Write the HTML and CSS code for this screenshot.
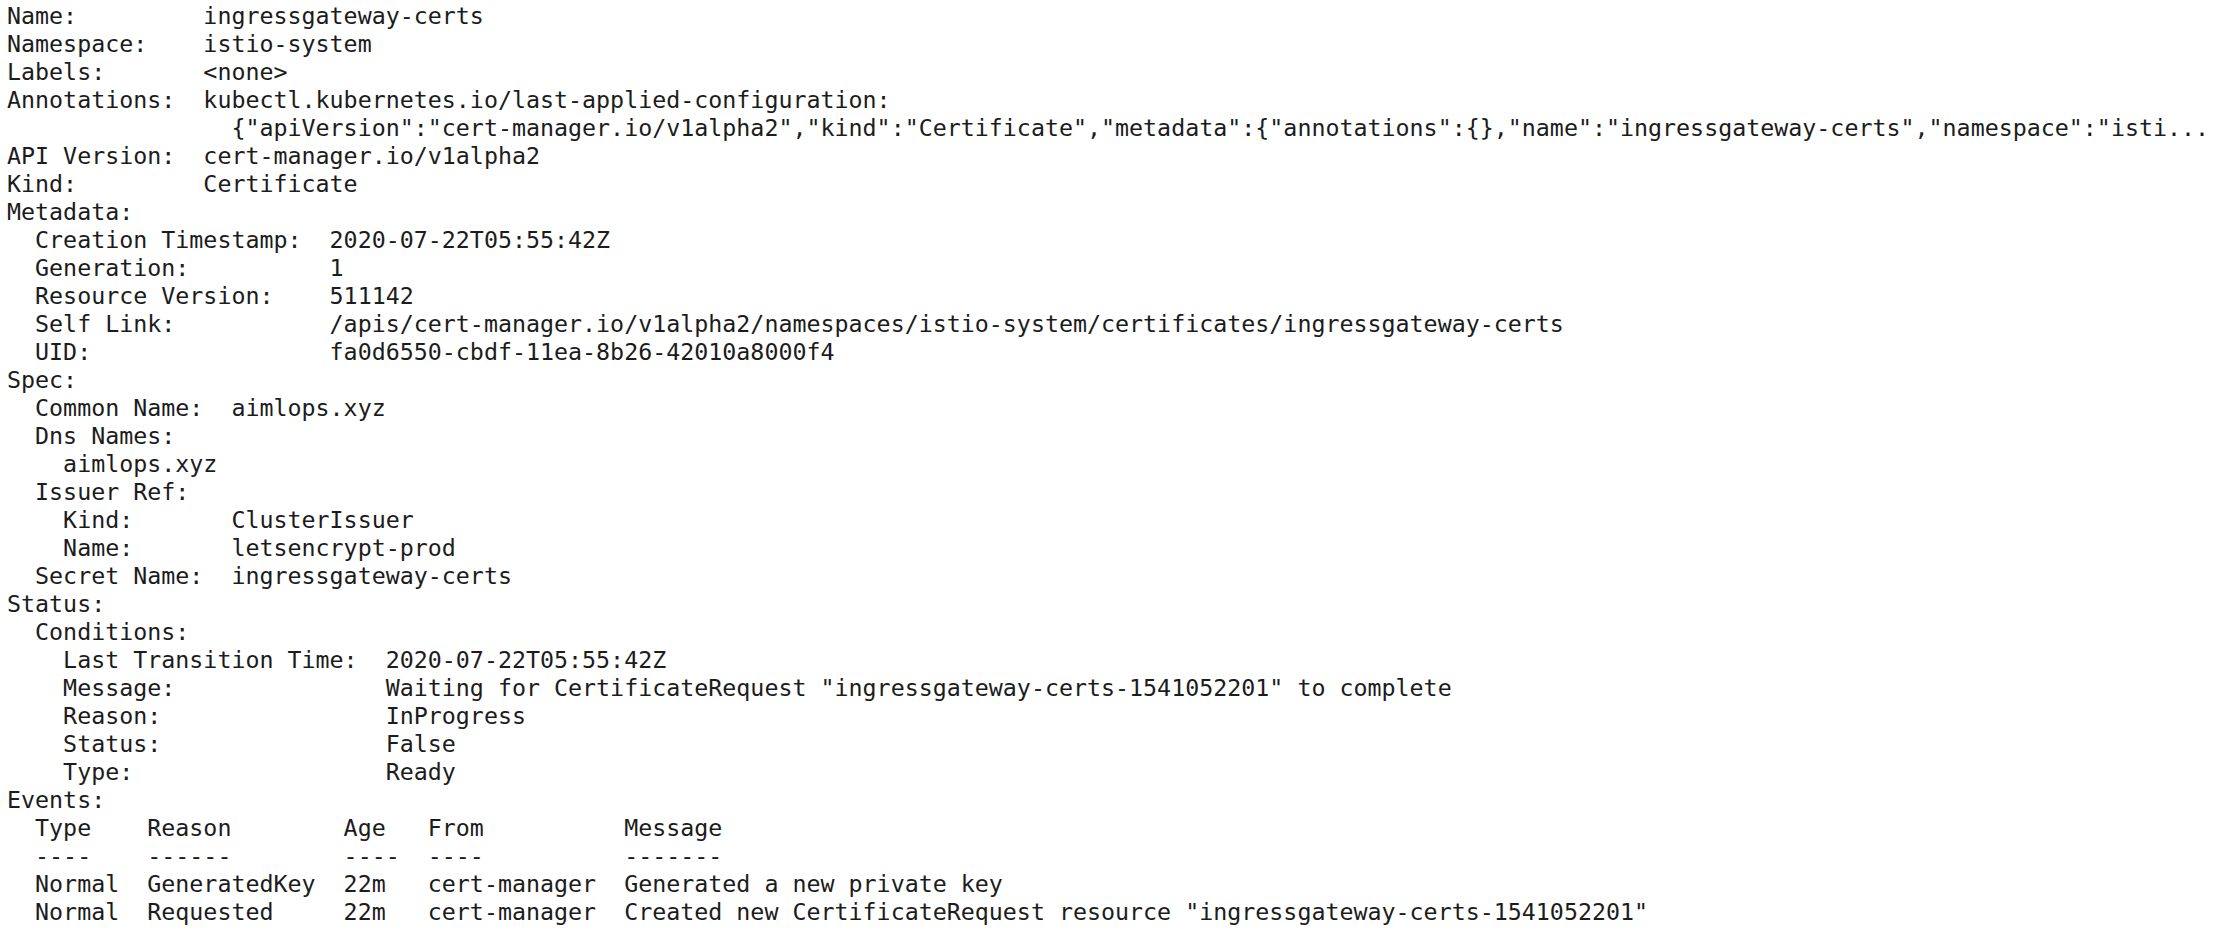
FILE: index.html
```html
<!DOCTYPE html>
<html lang="en">
<head>
<meta charset="utf-8">
<title>kubectl describe certificate</title>
<link rel="stylesheet" href="styles.css">
</head>
<body>
<div class="terminal">
<pre class="output">Name:         ingressgateway-certs
Namespace:    istio-system
Labels:       &lt;none&gt;
Annotations:  kubectl.kubernetes.io/last-applied-configuration:
                {"apiVersion":"cert-manager.io/v1alpha2","kind":"Certificate","metadata":{"annotations":{},"name":"ingressgateway-certs","namespace":"isti...
API Version:  cert-manager.io/v1alpha2
Kind:         Certificate
Metadata:
  Creation Timestamp:  2020-07-22T05:55:42Z
  Generation:          1
  Resource Version:    511142
  Self Link:           /apis/cert-manager.io/v1alpha2/namespaces/istio-system/certificates/ingressgateway-certs
  UID:                 fa0d6550-cbdf-11ea-8b26-42010a8000f4
Spec:
  Common Name:  aimlops.xyz
  Dns Names:
    aimlops.xyz
  Issuer Ref:
    Kind:       ClusterIssuer
    Name:       letsencrypt-prod
  Secret Name:  ingressgateway-certs
Status:
  Conditions:
    Last Transition Time:  2020-07-22T05:55:42Z
    Message:               Waiting for CertificateRequest "ingressgateway-certs-1541052201" to complete
    Reason:                InProgress
    Status:                False
    Type:                  Ready
Events:
  Type    Reason        Age   From          Message
  ----    ------        ----  ----          -------
  Normal  GeneratedKey  22m   cert-manager  Generated a new private key
  Normal  Requested     22m   cert-manager  Created new CertificateRequest resource "ingressgateway-certs-1541052201"</pre>
</div>
</body>
</html>
```

FILE: styles.css
```css
html, body {
  margin: 0;
  padding: 0;
  background: #ffffff;
}

.terminal {
  padding: 2px 0 0 7px;
  overflow: hidden;
  height: 928px;
}

.output {
  margin: 0;
  font-family: "DejaVu Sans Mono", "Liberation Mono", monospace;
  font-size: 23.3px;
  line-height: 28px;
  color: #1c1c1c;
  white-space: pre;
}
```
